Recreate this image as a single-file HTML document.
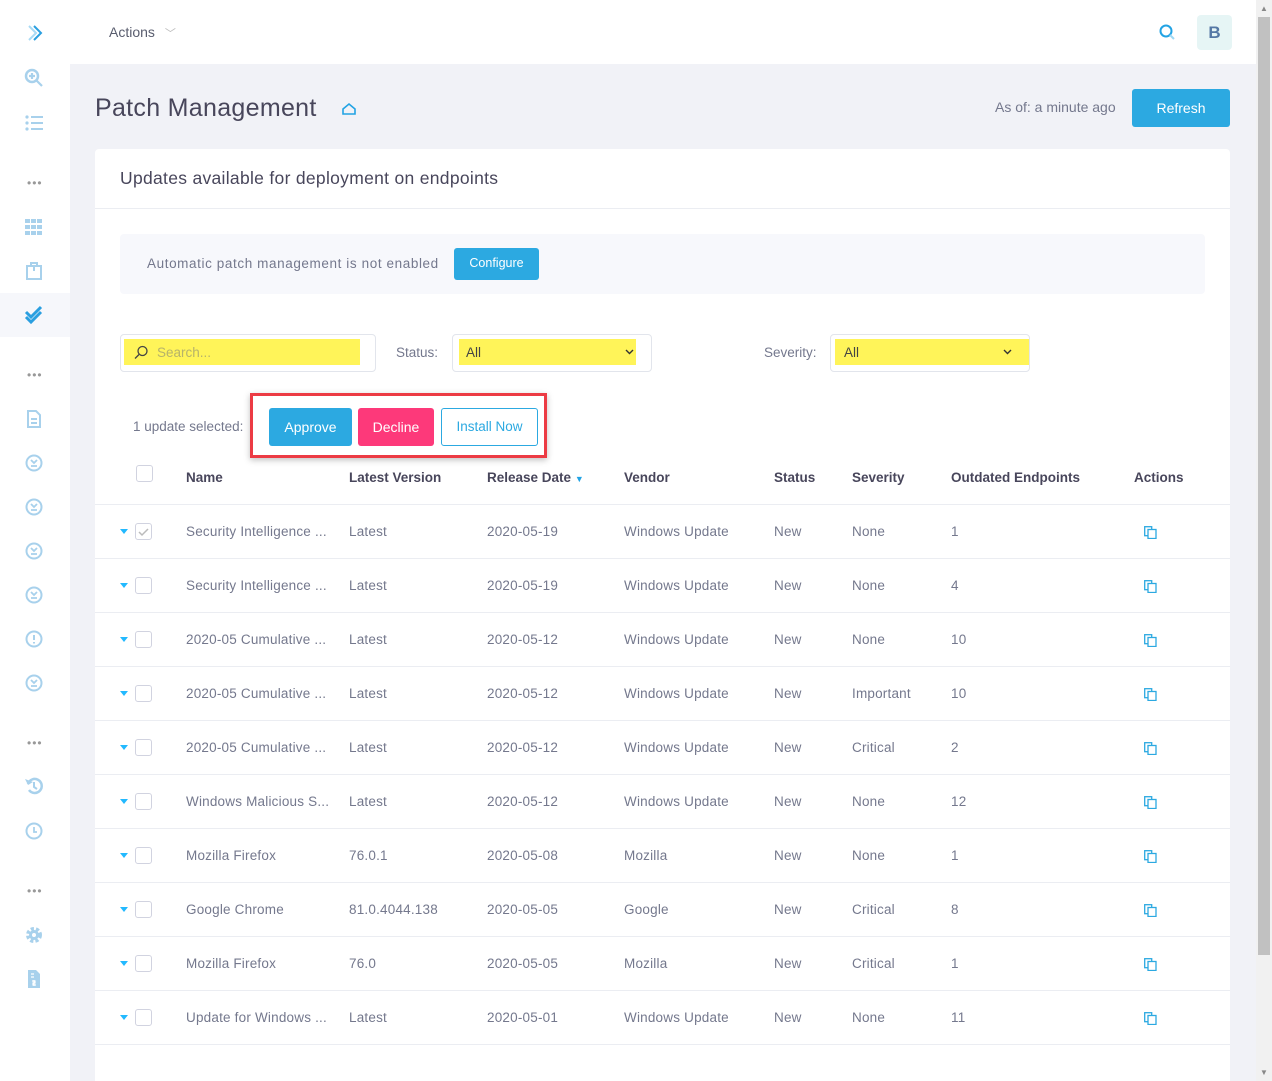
<!DOCTYPE html>
<html><head><meta charset="utf-8"><style>
*{box-sizing:border-box;margin:0;padding:0}
html{overflow:hidden;width:1272px;height:1081px}
body{width:1272px;height:1081px;overflow:hidden;background:#f1f2f7;font-family:"Liberation Sans",sans-serif;color:#595d6e;position:relative}
.side{position:absolute;left:0;top:0;width:70px;height:1081px;background:#fff}
.si{position:absolute;left:24px;width:20px;height:20px;color:#a8d1ec}
.dots{position:absolute;left:27px;font-size:12px;color:#999;letter-spacing:1px}
.top{position:absolute;left:70px;top:0;width:1186px;height:64px;background:#fff}
.scroll{position:absolute;left:1256px;top:0;width:16px;height:1081px;background:#f1f1f1}
.thumb{position:absolute;left:1258px;top:17px;width:12px;height:938px;background:#c1c1c1}
.card{position:absolute;left:95px;top:149px;width:1135px;height:932px;background:#fff;border-radius:4px 4px 0 0;overflow:hidden}
.abs{position:absolute;white-space:nowrap}
.btn{position:absolute;border-radius:3px;color:#fff;font-size:14px;text-align:center}
.row{position:absolute;left:0;width:1135px;height:54px;border-top:1px solid #ebedf2;font-size:13.5px;color:#74788d;letter-spacing:.2px}
.row span{position:absolute;top:19px;white-space:nowrap}
.cb{position:absolute;left:40px;top:18px;width:17px;height:17px;border:1px solid #d1d3e0;border-radius:3px;background:#fff}
.car{position:absolute;left:25px;top:24px;width:0;height:0;border-left:4px solid transparent;border-right:4px solid transparent;border-top:5px solid #22b9ff}
.cp{position:absolute;left:1049px;top:21px;width:13px;height:13px}
.th{position:absolute;font-weight:bold;font-size:13.5px;color:#48465b}
</style></head><body>
<div class="side">
<svg class="si" style="top:23px" viewBox="0 0 20 20"><path d="M5 3l7 7-7 7" fill="none" stroke="#a8daf5" stroke-width="2"/><path d="M10 3l7 7-7 7" fill="none" stroke="#2a9fe0" stroke-width="2"/></svg>
<svg class="si" style="top:68px" viewBox="0 0 20 20"><circle cx="8" cy="8" r="6" fill="none" stroke="#a8d1ec" stroke-width="2.5"/><path d="M12 12l6 6M8 5v6M5 8h6" stroke="#a8d1ec" stroke-width="2.2"/></svg>
<svg class="si" style="top:113px" viewBox="0 0 20 20"><g fill="#a8d1ec"><circle cx="3" cy="4" r="1.6"/><circle cx="3" cy="10" r="1.6"/><circle cx="3" cy="16" r="1.6"/><rect x="7" y="3" width="12" height="2"/><rect x="7" y="9" width="12" height="2"/><rect x="7" y="15" width="12" height="2"/></g></svg>
<div class="dots" style="top:176px">•••</div>
<svg class="si" style="top:217px" viewBox="0 0 20 20"><g fill="#a8d1ec"><rect x="1" y="2" width="5" height="4"/><rect x="7" y="2" width="5" height="4"/><rect x="13" y="2" width="5" height="4"/><rect x="1" y="8" width="5" height="4"/><rect x="7" y="8" width="5" height="4"/><rect x="13" y="8" width="5" height="4"/><rect x="1" y="14" width="5" height="4"/><rect x="7" y="14" width="5" height="4"/><rect x="13" y="14" width="5" height="4"/></g></svg>
<svg class="si" style="top:261px" viewBox="0 0 20 20"><rect x="3" y="5" width="14" height="13" fill="none" stroke="#a8d1ec" stroke-width="2"/><path d="M7 5V2h6v3M10 5v5" stroke="#a8d1ec" stroke-width="2" fill="none"/></svg>
<div style="position:absolute;left:0;top:293px;width:70px;height:44px;background:#f6f7fb"></div>
<svg class="si" style="top:305px" viewBox="0 0 20 20"><path d="M2 7l5 5 10-10M2 12l5 5 10-10" fill="none" stroke="#2a9fe0" stroke-width="3"/></svg>
<div class="dots" style="top:368px">•••</div>
<svg class="si" style="top:409px" viewBox="0 0 20 20"><path d="M4 2h8l4 4v12H4z" fill="none" stroke="#a8d1ec" stroke-width="2"/><path d="M7 10h6M7 14h6" stroke="#a8d1ec" stroke-width="2"/></svg>
<svg class="si" style="top:453px" viewBox="0 0 20 20"><circle cx="10" cy="10" r="7.5" fill="none" stroke="#a8d1ec" stroke-width="2"/><path d="M7 7l3 3 3-3M7 13h6" fill="none" stroke="#a8d1ec" stroke-width="1.8"/></svg>
<svg class="si" style="top:497px" viewBox="0 0 20 20"><circle cx="10" cy="10" r="7.5" fill="none" stroke="#a8d1ec" stroke-width="2"/><path d="M7 7l3 3 3-3M7 13h6" fill="none" stroke="#a8d1ec" stroke-width="1.8"/></svg>
<svg class="si" style="top:541px" viewBox="0 0 20 20"><circle cx="10" cy="10" r="7.5" fill="none" stroke="#a8d1ec" stroke-width="2"/><path d="M7 7l3 3 3-3M7 13h6" fill="none" stroke="#a8d1ec" stroke-width="1.8"/></svg>
<svg class="si" style="top:585px" viewBox="0 0 20 20"><circle cx="10" cy="10" r="7.5" fill="none" stroke="#a8d1ec" stroke-width="2"/><path d="M7 7l3 3 3-3M7 13h6" fill="none" stroke="#a8d1ec" stroke-width="1.8"/></svg>
<svg class="si" style="top:629px" viewBox="0 0 20 20"><circle cx="10" cy="10" r="7.5" fill="none" stroke="#a8d1ec" stroke-width="2"/><path d="M10 6v5M10 13v1.5" stroke="#a8d1ec" stroke-width="2"/></svg>
<svg class="si" style="top:673px" viewBox="0 0 20 20"><circle cx="10" cy="10" r="7.5" fill="none" stroke="#a8d1ec" stroke-width="2"/><path d="M7 7l3 3 3-3M7 13h6" fill="none" stroke="#a8d1ec" stroke-width="1.8"/></svg>
<div class="dots" style="top:736px">•••</div>
<svg class="si" style="top:776px" viewBox="0 0 20 20"><path d="M4 8a7 7 0 1 1 1 6" fill="none" stroke="#a8d1ec" stroke-width="2.5"/><path d="M1 3l3 6 5-3z" fill="#a8d1ec"/><path d="M10 6v5l3 2" stroke="#a8d1ec" stroke-width="2" fill="none"/></svg>
<svg class="si" style="top:821px" viewBox="0 0 20 20"><circle cx="10" cy="10" r="7.5" fill="none" stroke="#a8d1ec" stroke-width="2"/><path d="M10 6v5h3" stroke="#a8d1ec" stroke-width="1.8" fill="none"/></svg>
<div class="dots" style="top:884px">•••</div>
<svg class="si" style="top:925px" viewBox="0 0 20 20"><circle cx="10" cy="10" r="6" fill="none" stroke="#a8d1ec" stroke-width="4" stroke-dasharray="3 2"/><circle cx="10" cy="10" r="5" fill="#a8d1ec"/><circle cx="10" cy="10" r="2" fill="#fff"/></svg>
<svg class="si" style="top:969px" viewBox="0 0 20 20"><path d="M4 1h8l4 4v14H4z" fill="#a8d1ec"/><path d="M7 5h3M7 8h3M10 11v6M8 12h3v2H9v2h3" stroke="#fff" stroke-width="1.2" fill="none"/></svg>
</div>
<div class="top">
<div class="abs" style="left:39px;top:24px;font-size:14px;color:#595d6e">Actions <span style="color:#bbb;font-size:11px;margin-left:6px">﹀</span></div>
<svg style="position:absolute;left:1089px;top:24px" width="16" height="16" viewBox="0 0 16 16"><circle cx="7" cy="7" r="5.5" fill="none" stroke="#22a3e4" stroke-width="2"/><path d="M11 11l4 4" stroke="#9fd8f4" stroke-width="2"/></svg>
<div style="position:absolute;left:1127px;top:15px;width:35px;height:35px;background:#e6f5f5;border-radius:4px;text-align:center;line-height:35px;font-weight:bold;font-size:17px;color:#5578a5">B</div>
</div>
<div class="scroll"></div><div class="thumb"></div>
<div class="abs" style="left:1260px;top:4px;font-size:8px;color:#888">▲</div>
<div class="abs" style="left:1260px;top:1068px;font-size:8px;color:#888">▼</div>
<div class="abs" style="left:95px;top:94px;font-size:25px;color:#48465b;letter-spacing:.3px">Patch Management</div>
<svg style="position:absolute;left:341px;top:101px" width="16" height="16" viewBox="0 0 16 16"><path d="M2 13V8l6-5 6 5v5zM2 13h12" fill="none" stroke="#22a3e4" stroke-width="1.6"/></svg>
<div class="abs" style="left:995px;top:99px;font-size:14px;color:#74788d">As of: a minute ago</div>
<div class="btn" style="left:1132px;top:89px;width:98px;height:38px;line-height:38px;background:#2ca9e1">Refresh</div>
<div class="card">
<div class="abs" style="left:25px;top:19px;font-size:17.5px;color:#48465b;letter-spacing:.3px">Updates available for deployment on endpoints</div>
<div style="position:absolute;left:0;top:59px;width:1135px;border-top:1px solid #ebedf2"></div>
<div style="position:absolute;left:25px;top:85px;width:1085px;height:60px;background:#f7f8fc;border-radius:4px"></div>
<div class="abs" style="left:52px;top:107px;font-size:13.5px;color:#74788d;letter-spacing:.6px">Automatic patch management is not enabled</div>
<div class="btn" style="left:359px;top:99px;width:85px;height:32px;line-height:31px;background:#2ca9e1;font-size:12.5px">Configure</div>
<div style="position:absolute;left:25px;top:185px;width:256px;height:38px;border:1px solid #e2e5ec;border-radius:4px"></div>
<div style="position:absolute;left:29px;top:190px;width:236px;height:26px;background:#fff459"></div>
<svg style="position:absolute;left:39px;top:196px" width="15" height="15" viewBox="0 0 15 15"><circle cx="8.5" cy="6" r="4.5" fill="none" stroke="#444" stroke-width="1.3"/><path d="M5 9.5L1 13.5" stroke="#444" stroke-width="1.3"/></svg>
<div class="abs" style="left:62px;top:196px;font-size:13.5px;color:#b7b36a">Search...</div>
<div class="abs" style="left:301px;top:196px;font-size:13.5px;color:#74788d">Status:</div>
<div style="position:absolute;left:357px;top:185px;width:200px;height:38px;border:1px solid #e2e5ec;border-radius:4px"></div>
<div style="position:absolute;left:364px;top:190px;width:177px;height:26px;background:#fff459"></div>
<div class="abs" style="left:371px;top:196px;font-size:13.5px;color:#444">All</div>
<svg style="position:absolute;left:530px;top:200px" width="9" height="6" viewBox="0 0 9 6"><path d="M1 1l3.5 3.5L8 1" fill="none" stroke="#333" stroke-width="1.4"/></svg>
<div class="abs" style="left:669px;top:196px;font-size:13.5px;color:#74788d">Severity:</div>
<div style="position:absolute;left:735px;top:185px;width:200px;height:38px;border:1px solid #e2e5ec;border-radius:4px"></div>
<div style="position:absolute;left:740px;top:190px;width:194px;height:26px;background:#fff459"></div>
<div class="abs" style="left:749px;top:196px;font-size:13.5px;color:#444">All</div>
<svg style="position:absolute;left:908px;top:200px" width="9" height="6" viewBox="0 0 9 6"><path d="M1 1l3.5 3.5L8 1" fill="none" stroke="#333" stroke-width="1.4"/></svg>
<div class="abs" style="left:38px;top:270px;font-size:13.5px;color:#74788d">1 update selected:</div>
<div style="position:absolute;left:155px;top:244px;width:297px;height:65px;border:3px solid #ec3b44;box-shadow:0 2px 6px rgba(0,0,0,.25)"></div>
<div class="btn" style="left:174px;top:259px;width:83px;height:38px;line-height:38px;background:#2ca9e1">Approve</div>
<div class="btn" style="left:263px;top:259px;width:76px;height:38px;line-height:38px;background:#fd397a">Decline</div>
<div class="btn" style="left:346px;top:259px;width:97px;height:38px;line-height:36px;background:#fff;border:1px solid #2ca9e1;color:#2ca9e1;font-size:13.5px">Install Now</div>
<div class="cb" style="top:316px;left:41px"></div>
<div class="th" style="left:91px;top:321px">Name</div>
<div class="th" style="left:254px;top:321px">Latest Version</div>
<div class="th" style="left:392px;top:321px">Release Date <span style="color:#22a3e4;font-size:9px">▼</span></div>
<div class="th" style="left:529px;top:321px">Vendor</div>
<div class="th" style="left:679px;top:321px">Status</div>
<div class="th" style="left:757px;top:321px">Severity</div>
<div class="th" style="left:856px;top:321px">Outdated Endpoints</div>
<div class="th" style="left:1039px;top:321px">Actions</div>
<div id="rows"></div>
</div>
<script>
var d=[["Security Intelligence ...","Latest","2020-05-19","Windows Update","None","1"],["Security Intelligence ...","Latest","2020-05-19","Windows Update","None","4"],["2020-05 Cumulative ...","Latest","2020-05-12","Windows Update","None","10"],["2020-05 Cumulative ...","Latest","2020-05-12","Windows Update","Important","10"],["2020-05 Cumulative ...","Latest","2020-05-12","Windows Update","Critical","2"],["Windows Malicious S...","Latest","2020-05-12","Windows Update","None","12"],["Mozilla Firefox","76.0.1","2020-05-08","Mozilla","None","1"],["Google Chrome","81.0.4044.138","2020-05-05","Google","Critical","8"],["Mozilla Firefox","76.0","2020-05-05","Mozilla","Critical","1"],["Update for Windows ...","Latest","2020-05-01","Windows Update","None","11"]];
var h="";d.forEach(function(r,i){h+='<div class="row" style="top:'+(355+i*54)+'px"><div class="car"></div><div class="cb">'+(i==0?'<svg width="15" height="15" viewBox="0 0 15 15"><path d="M3 8l3 3 6-6" fill="none" stroke="#bbb" stroke-width="1.5"/></svg>':'')+'</div><span style="left:91px">'+r[0]+'</span><span style="left:254px">'+r[1]+'</span><span style="left:392px">'+r[2]+'</span><span style="left:529px">'+r[3]+'</span><span style="left:679px">New</span><span style="left:757px">'+r[4]+'</span><span style="left:856px">'+r[5]+'</span><svg class="cp" viewBox="0 0 13 13"><rect x="0.7" y="0.7" width="7" height="9" fill="none" stroke="#2ca9e1" stroke-width="1.3"/><rect x="4" y="3.5" width="8" height="9" fill="#fff" stroke="#2ca9e1" stroke-width="1.3"/></svg></div>'});
h+='<div class="row" style="top:895px"></div>';
document.getElementById("rows").innerHTML=h;
</script>
</body></html>
